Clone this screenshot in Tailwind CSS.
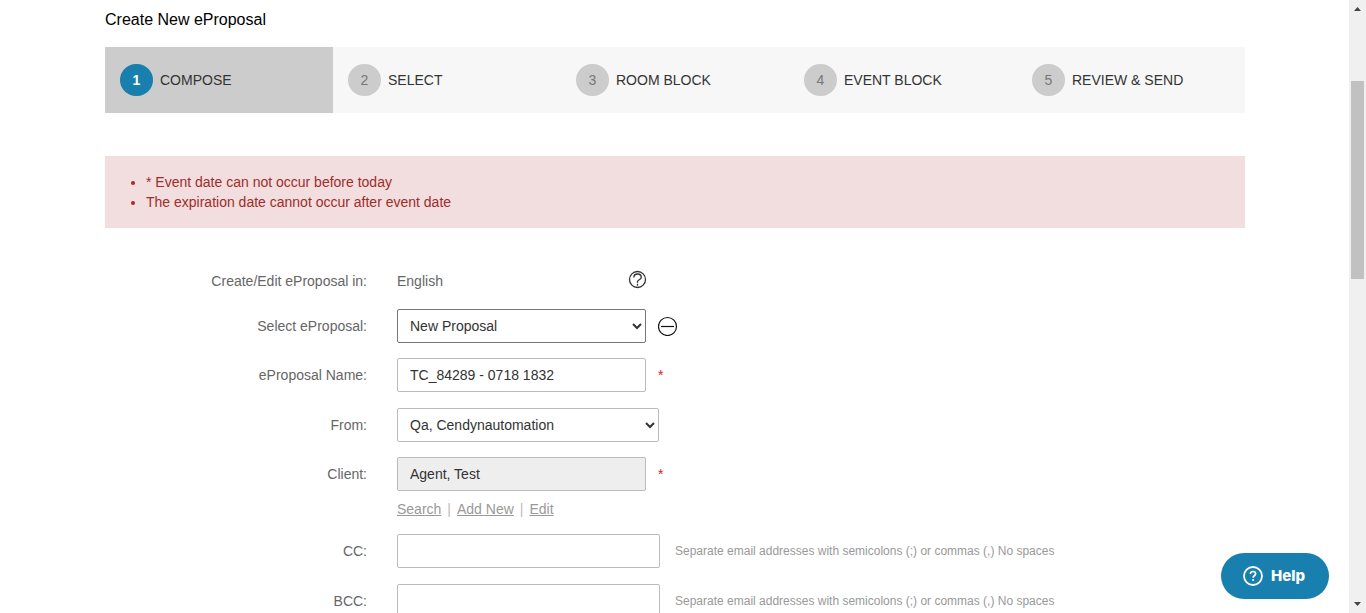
<!DOCTYPE html>
<html lang="en">
<head>
<meta charset="utf-8">
<meta name="viewport" content="width=device-width, initial-scale=1">
<title>Create New eProposal</title>
<script src="https://cdn.jsdelivr.net/npm/@tailwindcss/browser@4"></script>
</head>
<body class="flex h-screen overflow-hidden bg-white font-['Liberation_Sans',Arial,sans-serif] text-sm leading-5 text-[#666]">
<main class="min-w-0 flex-1 overflow-hidden pl-px">
  <div class="mx-auto max-w-[1140px]">
    <h1 class="pt-[10px] text-base leading-5 text-black">Create New eProposal</h1>

    <nav class="mt-[17px] bg-[#f7f7f7]" aria-label="Steps">
      <ol class="grid grid-cols-5 text-[#333]">
        <li class="bg-[#ccc]"><a href="#" aria-current="step" class="flex h-[66px] items-center gap-[7px] pl-[15px]"><span class="flex h-8 w-[33px] items-center justify-center rounded-full bg-[#187fae] font-bold text-white">1</span>COMPOSE</a></li>
        <li><a href="#" class="flex h-[66px] items-center gap-[7px] pl-[15px]"><span class="flex h-8 w-[33px] items-center justify-center rounded-full bg-[#ccc] text-[#777]">2</span>SELECT</a></li>
        <li><a href="#" class="flex h-[66px] items-center gap-[7px] pl-[15px]"><span class="flex h-8 w-[33px] items-center justify-center rounded-full bg-[#ccc] text-[#777]">3</span>ROOM BLOCK</a></li>
        <li><a href="#" class="flex h-[66px] items-center gap-[7px] pl-[15px]"><span class="flex h-8 w-[33px] items-center justify-center rounded-full bg-[#ccc] text-[#777]">4</span>EVENT BLOCK</a></li>
        <li><a href="#" class="flex h-[66px] items-center gap-[7px] pl-[15px]"><span class="flex h-8 w-[33px] items-center justify-center rounded-full bg-[#ccc] text-[#777]">5</span>REVIEW &amp; SEND</a></li>
      </ol>
    </nav>

    <div role="alert" class="mt-[43px] bg-[#f2dede] py-4 pl-[41px] text-[#a02c2c]">
      <ul class="list-disc">
        <li>* Event date can not occur before today</li>
        <li>The expiration date cannot occur after event date</li>
      </ul>
    </div>

    <form class="mt-[34px]">
      <div class="mb-[10px] grid grid-cols-[262px_1fr] items-center gap-[30px]">
        <span class="text-right">Create/Edit eProposal in:</span>
        <div class="flex h-[37px] items-center">
          <span class="w-[231px]">English</span>
          <button type="button" aria-label="Language help" class="mb-[2px]">
            <svg class="block size-[19px]" viewBox="0 0 19 19" fill="none" stroke="#333"><circle cx="9.5" cy="9.5" r="8" stroke-width="1.3"/><path d="M5.800 7.600C5.800 5.200 7.300 4 9.500 4s3.800 1.200 3.800 3.200c0 2.600-3.800 2.500-3.800 4.600v1" stroke-width="1.300"/><path d="M9.500 13.700v2" stroke-width="1.300"/></svg>
          </button>
        </div>
      </div>
      <div class="mb-[15px] grid grid-cols-[262px_1fr] items-center gap-[30px]">
        <label for="proposal" class="text-right">Select eProposal:</label>
        <div class="flex items-center gap-3">
          <select id="proposal" class="h-[34px] w-[249px] rounded-[2px] border border-[#777] bg-white px-2 text-[#333]"><option>New Proposal</option></select>
          <button type="button" aria-label="Remove proposal">
            <svg class="block size-5" viewBox="0 0 20 20" fill="none" stroke="#111" stroke-width="1.200"><circle cx="9.500" cy="10.500" r="9"/><path d="M3 10.500h13"/></svg>
          </button>
        </div>
      </div>
      <div class="mb-4 grid grid-cols-[262px_1fr] items-center gap-[30px]">
        <label for="name" class="text-right">eProposal Name:</label>
        <div class="flex items-center gap-3">
          <input id="name" type="text" value="TC_84289 - 0718 1832" class="h-[34px] w-[249px] rounded-[2px] border border-[#bbb] bg-white px-3 text-[#333]">
          <span class="text-[#e02020]">*</span>
        </div>
      </div>
      <div class="mb-[15px] grid grid-cols-[262px_1fr] items-center gap-[30px]">
        <label for="from" class="text-right">From:</label>
        <select id="from" class="h-[34px] w-[262px] rounded-[2px] border border-[#bbb] bg-white px-2 text-[#333]"><option>Qa, Cendynautomation</option></select>
      </div>
      <div class="grid grid-cols-[262px_1fr] items-center gap-x-[30px] gap-y-2">
        <label for="client" class="text-right">Client:</label>
        <div class="flex items-center gap-3">
          <input id="client" type="text" readonly value="Agent, Test" class="h-[34px] w-[249px] rounded-[2px] border border-[#bbb] bg-[#eee] px-3 text-[#333]">
          <span class="text-[#e02020]">*</span>
        </div>
        <div class="col-start-2 mb-[15px] flex gap-[6px] text-[#bbb]">
          <a href="#" class="text-[#999] underline">Search</a><span>|</span><a href="#" class="text-[#999] underline">Add New</a><span>|</span><a href="#" class="text-[#999] underline">Edit</a>
        </div>
      </div>
      <div class="mb-4 grid grid-cols-[262px_1fr] items-center gap-[30px]">
        <label for="cc" class="text-right">CC:</label>
        <div class="flex items-center gap-[15px]">
          <input id="cc" type="text" class="h-[34px] w-[263px] rounded-[2px] border border-[#bbb] bg-white px-3 text-[#333]">
          <span class="text-xs text-[#999]">Separate email addresses with semicolons (;) or commas (,) No spaces</span>
        </div>
      </div>
      <div class="grid grid-cols-[262px_1fr] items-center gap-[30px]">
        <label for="bcc" class="text-right">BCC:</label>
        <div class="flex items-center gap-[15px]">
          <input id="bcc" type="text" class="h-[34px] w-[263px] rounded-[2px] border border-[#bbb] bg-white px-3 text-[#333]">
          <span class="text-xs text-[#999]">Separate email addresses with semicolons (;) or commas (,) No spaces</span>
        </div>
      </div>
    </form>
  </div>
</main>

<!-- Page scrollbar -->
<div class="flex w-[17px] shrink-0 flex-col items-center bg-[#f0f0f0]" aria-hidden="true">
  <svg class="h-[17px] w-[17px] shrink-0" viewBox="0 0 17 17" fill="#444"><path d="M5 11h7L8.500 7z"/></svg>
  <div class="mt-16 h-[198px] w-[13px] shrink-0 bg-[#c1c1c1]"></div>
  <svg class="mt-auto h-[17px] w-[17px] shrink-0" viewBox="0 0 17 17" fill="#444"><path d="M5 6h7L8.500 10z"/></svg>
</div>

<button type="button" class="fixed right-[37px] bottom-[14px] flex h-[46px] w-[108px] items-center gap-2 rounded-full bg-[#187fae] pl-[22px] font-['Inter',sans-serif] text-[15px] font-extrabold text-white">
  <svg class="size-5 shrink-0" viewBox="0 0 20 20" fill="none" stroke="#fff"><circle cx="10" cy="10" r="9" stroke-width="1.800"/><path d="M7.400 8c0-1.600 1.100-2.500 2.600-2.500s2.600.9 2.600 2.300c0 1.900-2.500 2-2.500 4" stroke-width="1.700"/><circle cx="10.100" cy="14" r="1.100" fill="#fff" stroke="none"/></svg>
  Help
</button>
</body>
</html>
